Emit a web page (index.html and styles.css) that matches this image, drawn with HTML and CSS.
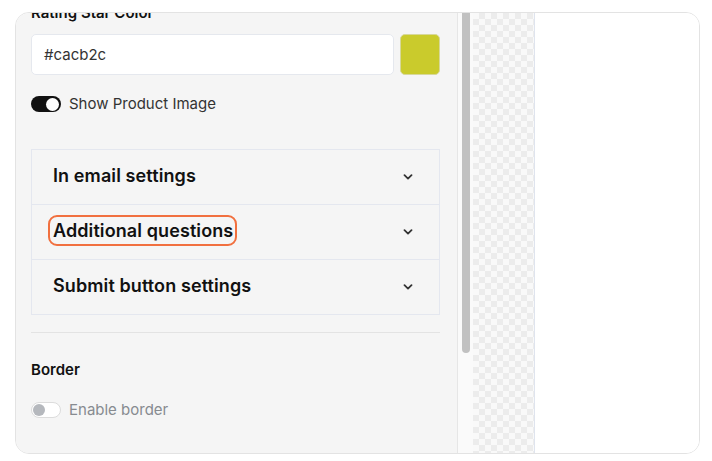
FILE: index.html
```
<!DOCTYPE html>
<html>
<head>
<meta charset="utf-8">
<link rel="stylesheet" href="styles.css">
</head>
<body>
<div class="card">
  <div class="panel">
    <div class="panel-inner">
      <div class="label">Rating Star Color</div>
      <div class="color-row">
        <div class="input">#cacb2c</div>
        <div class="swatch"></div>
      </div>
      <div class="toggle-row">
        <span class="toggle on"><span class="knob"></span></span>
        <span class="toggle-text">Show Product Image</span>
      </div>
      <div class="accordion">
        <div class="acc-row">
          <span class="acc-title">In email settings</span>
          <svg class="chev" width="10" height="6" viewBox="0 0 10 6"><path d="M1.5 1.2 L5 4.6 L8.5 1.2" fill="none" stroke="#333" stroke-width="1.8" stroke-linecap="round" stroke-linejoin="round"/></svg>
        </div>
        <div class="acc-row">
          <span class="acc-title highlight">Additional questions</span>
          <svg class="chev" width="10" height="6" viewBox="0 0 10 6"><path d="M1.5 1.2 L5 4.6 L8.5 1.2" fill="none" stroke="#333" stroke-width="1.8" stroke-linecap="round" stroke-linejoin="round"/></svg>
        </div>
        <div class="acc-row">
          <span class="acc-title">Submit button settings</span>
          <svg class="chev" width="10" height="6" viewBox="0 0 10 6"><path d="M1.5 1.2 L5 4.6 L8.5 1.2" fill="none" stroke="#333" stroke-width="1.8" stroke-linecap="round" stroke-linejoin="round"/></svg>
        </div>
      </div>
      <div class="divider"></div>
      <div class="section-title">Border</div>
      <div class="toggle-row off-row">
        <span class="toggle off"><span class="knob"></span></span>
        <span class="toggle-text muted">Enable border</span>
      </div>
    </div>
  </div>
  <div class="scrollbar"><div class="thumb"></div></div>
  <div class="checker"></div>
  <div class="preview"></div>
</div>
</body>
</html>
```
FILE: styles.css
```
* { box-sizing: border-box; }
html, body { margin: 0; padding: 0; background: #fff; }
body {
  font-family: Inter, "Noto Sans", sans-serif;
  padding: 12px 12px 0 15px;
}
.card {
  width: 685px;
  height: 442px;
  border: 1px solid #e3e3e3;
  border-radius: 14px;
  overflow: hidden;
  display: flex;
  background: #fff;
}
.panel {
  width: 442px;
  flex: none;
  background: #f5f5f5;
  border-right: 1px solid #e6e6e6;
  overflow: hidden;
  padding: 0 17px 0 15px;
}
.panel-inner {
  margin-top: -10px;
}
.label {
  font-size: 15px;
  font-weight: 600;
  line-height: 20px;
  color: #111;
}
.color-row {
  display: flex;
  gap: 6px;
  margin-top: 11px;
}
.input {
  flex: 1;
  height: 41px;
  background: #fff;
  border: 1px solid #e5e8ee;
  border-radius: 5px;
  padding: 0 12px;
  font-size: 15px;
  line-height: 39px;
  color: #333;
}
.swatch {
  width: 40px;
  height: 41px;
  background: #cacb2c;
  border: 1px solid #d7d89a;
  border-radius: 5px;
}
.toggle-row {
  display: flex;
  align-items: center;
  gap: 8px;
  margin-top: 19px;
}
.toggle {
  width: 30px;
  height: 16px;
  border-radius: 8px;
  display: flex;
  align-items: center;
  padding: 2px;
}
.toggle.on { background: #111; justify-content: flex-end; }
.toggle.on .knob { background: #fff; width: 13px; height: 13px; }
.toggle.off { background: #fff; border: 1px solid #dcdcdc; padding: 1px; }
.toggle.off .knob { background: #b5b8bd; }
.knob {
  width: 12px;
  height: 12px;
  border-radius: 50%;
}
.toggle-text {
  font-size: 15px;
  color: #333;
  line-height: 20px;
}
.toggle-text.muted { color: #878b90; }
.accordion {
  margin-top: 35px;
  border: 1px solid #e4e7ef;
}
.acc-row {
  height: 55px;
  display: flex;
  align-items: center;
  justify-content: space-between;
  padding: 0 26px 3px 21px;
  border-top: 1px solid #e4e7ef;
}
.acc-row:first-child { border-top: none; height: 54px; }
.acc-title {
  font-size: 18px;
  font-weight: 600;
  color: #111;
  letter-spacing: 0.1px;
}
.chev { margin-top: 3px; }
.highlight { position: relative; }
.highlight::after {
  content: "";
  position: absolute;
  left: -5px;
  right: -4px;
  top: -5px;
  bottom: -5px;
  border: 2px solid #f1703f;
  border-radius: 9px;
}
.chev { display: block; }
.divider {
  height: 1px;
  background: #e3e3e3;
  margin-top: 17px;
}
.section-title {
  margin-top: 27px;
  font-size: 15px;
  font-weight: 600;
  color: #111;
  line-height: 20px;
}
.off-row { margin-top: 20px; }
.scrollbar {
  width: 15px;
  flex: none;
  background: #fafafa;
  padding: 0 3px 0 4px;
}
.thumb {
  width: 8px;
  height: 340px;
  background: #c1c1c1;
  border-radius: 0 0 4px 4px;
}
.checker {
  width: 62px;
  flex: none;
  border-right: 1px solid #dfe4ee;
  background-color: #f9f9f9;
  background-image:
    linear-gradient(45deg, #ececec 25%, transparent 25%, transparent 75%, #ececec 75%),
    linear-gradient(45deg, #ececec 25%, transparent 25%, transparent 75%, #ececec 75%);
  background-size: 12px 12px;
  background-position: 0 0, 6px 6px;
}
.preview { flex: 1; background: #fff; }
```
